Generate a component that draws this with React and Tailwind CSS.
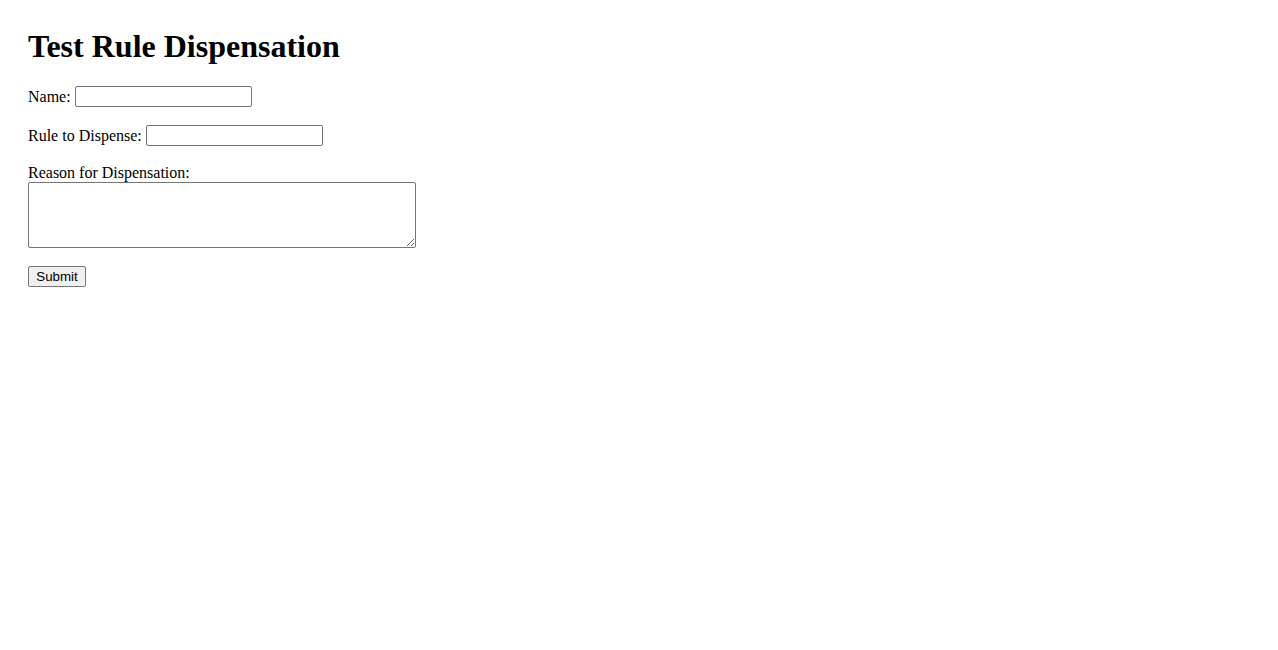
export default function App() {
  return (
    <div className="min-h-[650px] bg-white px-[28px] pt-[28px] font-['Liberation_Serif','Times_New_Roman',serif] text-[16px] text-black">
      <h1 className="text-[32px] font-bold leading-[37px]">Test Rule Dispensation</h1>

      <form className="mt-[21px]" onSubmit={(e) => e.preventDefault()}>
        <div className="flex items-center gap-[4px] h-[21px]">
          <label htmlFor="name" className="leading-[18px]">Name:</label>
          <input
            id="name"
            type="text"
            className="h-[21px] w-[177px] rounded-[2px] border border-[#767676] bg-white px-[2px] font-['Liberation_Sans',sans-serif] text-[13.33px]"
          />
        </div>

        <div className="mt-[18px] flex items-center gap-[4px] h-[21px]">
          <label htmlFor="rule" className="leading-[18px]">Rule to Dispense:</label>
          <input
            id="rule"
            type="text"
            className="h-[21px] w-[177px] rounded-[2px] border border-[#767676] bg-white px-[2px] font-['Liberation_Sans',sans-serif] text-[13.33px]"
          />
        </div>

        <div className="mt-[17px]">
          <label htmlFor="reason" className="block leading-[19px]">Reason for Dispensation:</label>
          <textarea
            id="reason"
            className="block h-[66px] w-[388px] rounded-[2px] border border-[#767676] bg-white p-[2px] font-['Liberation_Mono',monospace] text-[13.33px]"
          />
        </div>

        <button
          type="submit"
          className="mt-[18px] block h-[21px] w-[58px] rounded-[2px] border border-[#767676] bg-[#efefef] text-center font-['Liberation_Sans',Arial,sans-serif] text-[13.33px] leading-[19px] text-black"
        >
          Submit
        </button>
      </form>
    </div>
  )
}
